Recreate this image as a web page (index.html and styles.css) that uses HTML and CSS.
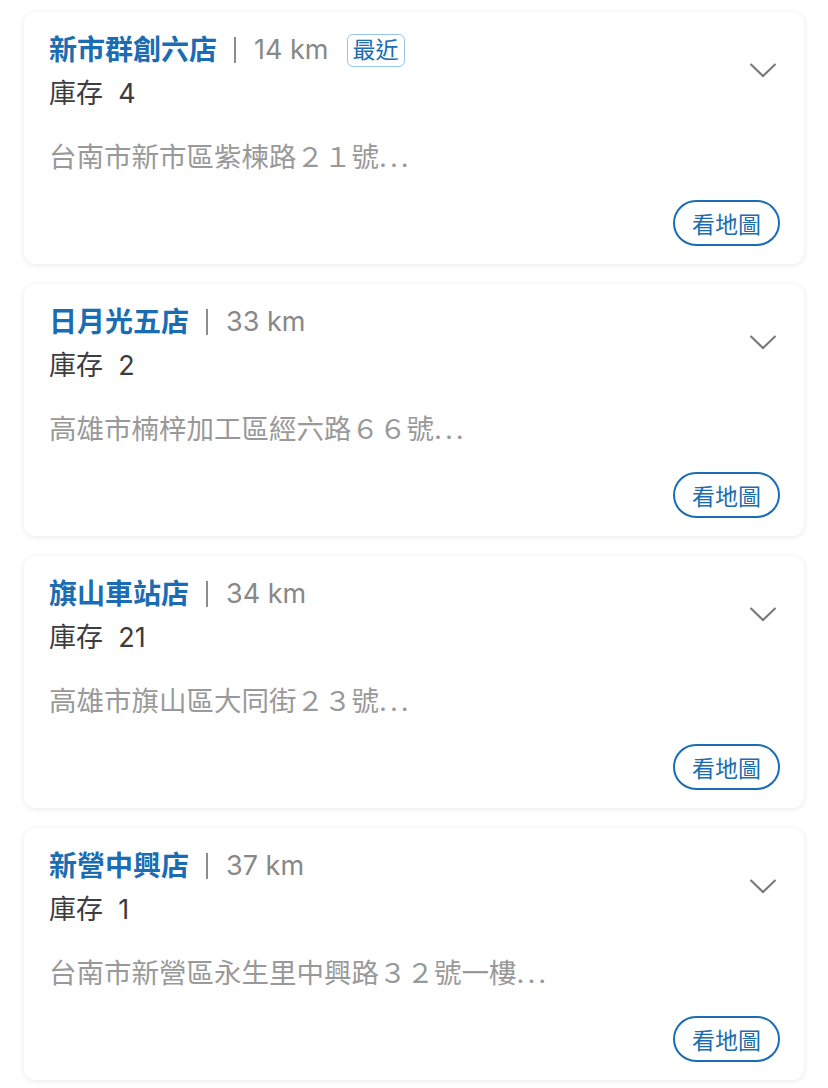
FILE: index.html
```html
<!DOCTYPE html>
<html lang="zh-Hant">
<head>
    <meta charset="UTF-8">
    <title>門市庫存</title>
    <link rel="stylesheet" href="styles.css">
</head>
<body>
    <div class="store-list">
        <div class="store-card">
            <div class="store-head">
                <div class="store-info">
                    <div class="store-title">
                        <span class="store-name">新市群創六店</span>
                        <span class="divider"></span>
                        <span class="distance">14 km</span>
                        <span class="badge">最近</span>
                    </div>
                    <div class="stock">庫存&nbsp;&nbsp;4</div>
                </div>
                <svg class="chevron" width="28" height="16" viewBox="0 0 28 16"><path d="M1.5 2 L14 14 L26.5 2" fill="none" stroke="#777" stroke-width="2"/></svg>
            </div>
            <div class="address">台南市新市區紫楝路２１號<span class="dots">...</span></div>
            <div class="actions"><button class="map-btn">看地圖</button></div>
        </div>

        <div class="store-card">
            <div class="store-head">
                <div class="store-info">
                    <div class="store-title">
                        <span class="store-name">日月光五店</span>
                        <span class="divider"></span>
                        <span class="distance">33 km</span>
                    </div>
                    <div class="stock">庫存&nbsp;&nbsp;2</div>
                </div>
                <svg class="chevron" width="28" height="16" viewBox="0 0 28 16"><path d="M1.5 2 L14 14 L26.5 2" fill="none" stroke="#777" stroke-width="2"/></svg>
            </div>
            <div class="address">高雄市楠梓加工區經六路６６號<span class="dots">...</span></div>
            <div class="actions"><button class="map-btn">看地圖</button></div>
        </div>

        <div class="store-card">
            <div class="store-head">
                <div class="store-info">
                    <div class="store-title">
                        <span class="store-name">旗山車站店</span>
                        <span class="divider"></span>
                        <span class="distance">34 km</span>
                    </div>
                    <div class="stock">庫存&nbsp;&nbsp;21</div>
                </div>
                <svg class="chevron" width="28" height="16" viewBox="0 0 28 16"><path d="M1.5 2 L14 14 L26.5 2" fill="none" stroke="#777" stroke-width="2"/></svg>
            </div>
            <div class="address">高雄市旗山區大同街２３號<span class="dots">...</span></div>
            <div class="actions"><button class="map-btn">看地圖</button></div>
        </div>

        <div class="store-card">
            <div class="store-head">
                <div class="store-info">
                    <div class="store-title">
                        <span class="store-name">新營中興店</span>
                        <span class="divider"></span>
                        <span class="distance">37 km</span>
                    </div>
                    <div class="stock">庫存&nbsp;&nbsp;1</div>
                </div>
                <svg class="chevron" width="28" height="16" viewBox="0 0 28 16"><path d="M1.5 2 L14 14 L26.5 2" fill="none" stroke="#777" stroke-width="2"/></svg>
            </div>
            <div class="address">台南市新營區永生里中興路３２號一樓<span class="dots">...</span></div>
            <div class="actions"><button class="map-btn">看地圖</button></div>
        </div>
    </div>
</body>
</html>
```

FILE: styles.css
```css
body {
    margin: 0;
    background-color: #fff;
    font-family: Inter, "Noto Sans CJK TC", sans-serif;
}
.store-list {
    display: flex;
    flex-direction: column;
    gap: 20px;
    padding: 12px 24px;
}
.store-card {
    background-color: #fff;
    border-radius: 12px;
    box-shadow: 0 1px 6px rgba(0,0,0,0.09);
    padding: 20px 24px 18px 25px;
}
.store-head {
    display: flex;
    align-items: center;
    justify-content: space-between;
}
.store-title {
    display: flex;
    align-items: center;
    height: 36px;
}
.store-name {
    font-size: 28px;
    font-weight: bold;
    color: #1a6db3;
    line-height: 36px;
}
.divider {
    width: 2px;
    height: 26px;
    background-color: #8c8c8c;
    margin: 0 18px 0 17px;
}
.distance {
    font-size: 27px;
    color: #888;
    line-height: 36px;
}
.badge {
    margin-left: 18px;
    height: 31px;
    padding: 0 5px;
    border: 1.5px solid #97c6e9;
    border-radius: 6px;
    color: #1a6db3;
    font-size: 23px;
    line-height: 31px;
}
.stock {
    margin-top: 8px;
    font-size: 27px;
    line-height: 36px;
    color: #3d3d3d;
}
.chevron {
    margin-right: 3px;
    margin-top: -5px;
}
.address {
    margin-top: 27px;
    font-size: 27.5px;
    line-height: 36px;
    color: #999;
}
.dots {
    letter-spacing: 3px;
}
.actions {
    display: flex;
    justify-content: flex-end;
    margin-top: 25px;
}
.map-btn {
    height: 46px;
    padding: 0 17px;
    border: 2px solid #1a6db3;
    border-radius: 23px;
    background-color: #fff;
    color: #1a6db3;
    font-family: "Noto Sans CJK TC", sans-serif;
    font-size: 23px;
}
```
